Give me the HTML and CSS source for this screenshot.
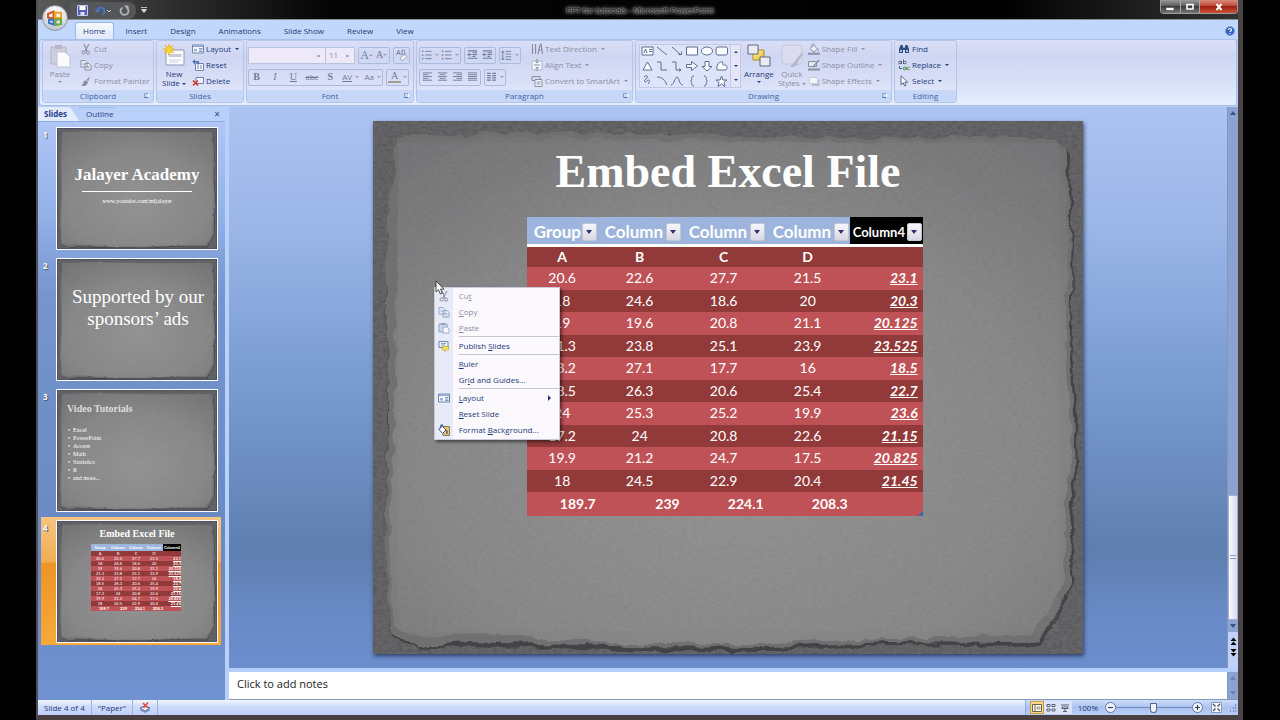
FILE: index.html
```
<!DOCTYPE html>
<html lang="en">
<head>
  <meta charset="UTF-8" />
  <title>PPT for tutorials - Microsoft PowerPoint</title>
  <meta name="viewport" content="width=device-width, initial-scale=1" />
  <link rel="stylesheet" href="styles.css">
</head>
<body>
  <!-- shared drawings -->
  <svg class="defs" width="0" height="0" aria-hidden="true">
    <defs>
      <radialGradient id="paper-fill" cx="50%" cy="62%" r="75%">
        <stop offset="0" stop-color="#919191" />
        <stop offset="0.6" stop-color="#858585" />
        <stop offset="1" stop-color="#717173" />
      </radialGradient>
      <linearGradient id="gold" x1="0" y1="0" x2="1" y2="1">
        <stop offset="0" stop-color="#fff3b0" />
        <stop offset="1" stop-color="#e8b820" />
      </linearGradient>
      <filter id="torn" x="-5%" y="-5%" width="110%" height="110%">
        <feTurbulence type="fractalNoise" baseFrequency="0.045" numOctaves="4" seed="7" result="n" />
        <feDisplacementMap in="SourceGraphic" in2="n" scale="10" xChannelSelector="R" yChannelSelector="G" />
      </filter>
      <filter id="grain" x="0" y="0" width="100%" height="100%">
        <feTurbulence type="fractalNoise" baseFrequency="0.2 0.35" numOctaves="4" seed="3" />
        <feColorMatrix values="1 0 0 0 0  1 0 0 0 0  1 0 0 0 0  0 0 0 0 1" />
      </filter>
    </defs>
    <symbol id="paper" viewBox="0 0 711 533" preserveAspectRatio="none">
      <rect width="711" height="533" fill="#535356" />
      <rect width="711" height="533" filter="url(#grain)" opacity="0.14" />
      <g transform="translate(-4 0)">
        <path filter="url(#torn)" fill="#434346" d="M28 18 L150 13 300 17 470 20 600 18 686 20 701 32 705 120 702 220 709 300 705 420 703 470 688 500 672 526 520 524 400 530 240 530 100 525 50 530 22 516 16 420 18 300 17 120Z" />
        <path filter="url(#torn)" fill="#707071" d="M28 16 L150 12 300 14 470 17 600 16 686 18 698 30 703 120 700 220 706 300 702 420 701 470 685 497 670 522 520 521 400 526 240 525 100 521 50 528 22 513 16 420 19 300 17 120Z" />
        <path filter="url(#torn)" fill="url(#paper-fill)" d="M31 19 L150 17 300 19 470 21 600 20 682 22 694 34 699 120 696 220 702 300 696 420 692 470 677 494 662 514 520 518 400 522 240 522 100 512 50 517 25 505 20 420 26 300 27 120Z" />
      </g>
      <rect x="26" y="22" width="660" height="488" filter="url(#grain)" opacity="0.05" />
    </symbol>
    <symbol id="i-cut" viewBox="0 0 12 12"><path d="M4 1 7 8M9 1 5 8" fill="none" stroke="currentColor" stroke-width="1.2" /><circle cx="3.6" cy="9.4" r="1.6" fill="none" stroke="currentColor" /><circle cx="8" cy="9.6" r="1.6" fill="none" stroke="currentColor" /></symbol>
    <symbol id="i-copy" viewBox="0 0 12 12"><path d="M1 1.500h4l2 2v4.500H1z M5 4.500h4l2 2v4.500H5z" fill="#eef2fc" stroke="currentColor" /><path d="M2.500 4h2M2.500 5.500h2M6.500 7.500h3M6.500 9h3" stroke="currentColor" stroke-width=".7" /></symbol>
    <symbol id="i-paste" viewBox="0 0 12 12"><path d="M1 2h8v8H1z" fill="#cfd6e6" stroke="currentColor" /><path d="M3 1h4v2H3z" fill="currentColor" /><path d="M5 5h4l2 2v4H5z" fill="#f5f7fd" stroke="currentColor" stroke-width=".8" /></symbol>
    <symbol id="i-brush" viewBox="0 0 12 12"><path d="M10 1 6.500 5l-3 1.500c0 2-1 3-2.500 4.500h4c2-1 2.500-2.500 3-4z" fill="currentColor" /><path d="M6.500 5 8 6.500" stroke="#fff" stroke-width=".8" /></symbol>
    <symbol id="i-layout" viewBox="0 0 12 12"><path d="M.5 2h11v8H.5z" fill="#f6f8ff" stroke="#6f84a8" /><path d="M1 2.500h10V4H1z" fill="#8ea6d0" /><path d="M2 6h3v2.500H2z" fill="#9fb3d8" /><path d="M7 5.500h3.500M7 7h3.500M7 8.500h3.500" stroke="#6b7ea6" stroke-width=".8" /></symbol>
    <symbol id="i-reset" viewBox="0 0 12 12"><path d="M3.500 4.500h8v7h-8z" fill="#f4f7ff" stroke="#6f84a8" /><path d="M5 7h2M8 7h2M5 9h2M8 9h2" stroke="#7587ab" /><path d="M5.500 5.500V3.500H3v1.800L.2 2.800 3 .3v1.600h4v3.600z" fill="#4c6fb5" /></symbol>
    <symbol id="i-delete" viewBox="0 0 12 12"><path d="M4 2.500h7.500v6H4z" fill="#eef3ff" stroke="#6f84a8" /><path d="m1 5.500 5 5M6 5.500l-5 5" stroke="#d5392b" stroke-width="1.700" /></symbol>
    <symbol id="i-publish" viewBox="0 0 12 12"><path d="M1 1.500h9v6H1z" fill="#eef2fb" stroke="#7186a8" /><path d="M3 3.500h5M3 5h4" stroke="#8ea0bf" /><path d="M4.500 6.500h6v3.500H8l-1 1.500L6.500 10h-2z" fill="#f7e45a" stroke="#ad9a28" stroke-width=".6" /></symbol>
    <symbol id="i-bucket" viewBox="0 0 12 12"><path d="M2 5.500 5.500 2l4 4L6 9z" fill="#eef1f8" stroke="currentColor" /><path d="M4 4.500V2c0-2 2.500-2 2.500 0" fill="none" stroke="currentColor" stroke-width=".8" /><path d="M9 5c2 1 2 2.500 1.500 4z" fill="currentColor" /><path d="M0 10.800h12" stroke="currentColor" stroke-width="2" /></symbol>
    <symbol id="i-format-bg" viewBox="0 0 12 12"><path d="M5 2.500h6.500v9H5z" fill="#efc55f" stroke="#7b7a78" /><path d="M.7 5 4 2l4 4-3.500 3.500z" fill="#fff" stroke="#4a5678" /><path d="M2.500 4.500V2c0-2 2.500-2 2.500 0M8 6c1.500.5 2 2 1 4z" fill="#5676bd" stroke="#4a5678" stroke-width=".7" /></symbol>
    <symbol id="i-list" viewBox="0 0 12 12"><path d="M4.500 2h7M4.500 6h7M4.500 10h7" stroke="currentColor" /><path d="M1 2h1.500M1 6h1.500M1 10h1.500" stroke="currentColor" stroke-width="1.600" /></symbol>
    <symbol id="i-indent" viewBox="0 0 12 12"><path d="M1 1.500h10M6 3.500h5M6 5.500h5M6 7.500h3M1 9.500h10" stroke="currentColor" stroke-width="1.200" /><path d="M5 5.500H1m2-2-2 2 2 2" fill="none" stroke="#56709f" /></symbol>
    <symbol id="i-spacing" viewBox="0 0 12 12"><path d="M5 2h6M5 5h6M5 8h6M5 11h6M2 1.500v10M.5 3.500 2 1.500l1.500 2M.5 9.500 2 11.500l1.500-2" fill="none" stroke="currentColor" /></symbol>
    <symbol id="i-left" viewBox="0 0 12 12"><path d="M1 1.500h10M1 3.500h6M1 5.500h10M1 7.500h6M1 9.500h10" stroke="currentColor" /></symbol>
    <symbol id="i-center" viewBox="0 0 12 12"><path d="M1 1.500h10M3 3.500h6M1 5.500h10M3 7.500h6M1 9.500h10" stroke="currentColor" /></symbol>
    <symbol id="i-right" viewBox="0 0 12 12"><path d="M1 1.500h10M5 3.500h6M1 5.500h10M5 7.500h6M1 9.500h10" stroke="currentColor" /></symbol>
    <symbol id="i-justify" viewBox="0 0 12 12"><path d="M1 1.500h10M1 3.500h10M1 5.500h10M1 7.500h10M1 9.500h10" stroke="currentColor" /></symbol>
    <symbol id="i-columns" viewBox="0 0 12 12"><path d="M1 2h4.300M6.700 2H11M1 4.500h4.300M6.700 4.500H11M1 7h4.300M6.700 7H11M1 9.500h4.300M6.700 9.500H11" stroke="currentColor" stroke-width="1.300" /></symbol>
    <symbol id="i-textdir" viewBox="0 0 12 12"><path d="M1.500 1v10M4.500 1v10M7 11l1.500-7L10 1l1.500 10M8 7h3" fill="none" stroke="currentColor" stroke-width="1.200" /></symbol>
    <symbol id="i-aligntext" viewBox="0 0 12 12"><path d="M1 2h10v9H1z" fill="#f2f4fb" stroke="#b2b8c8" /><path d="M6 0v4M6 8v4M3 6h6M4.500 2.500 6 4l1.500-1.500M4.500 9.500 6 8l1.500 1.500" fill="none" stroke="currentColor" /></symbol>
    <symbol id="i-smartart" viewBox="0 0 12 12"><path d="M1 1.500h8v4H1z" fill="#d5daea" stroke="currentColor" /><path d="M4 4.500h7v7H4z" fill="#f4f6fc" stroke="currentColor" /><path d="M5.500 7h4M5.500 9h4" stroke="currentColor" /></symbol>
    <symbol id="i-outline" viewBox="0 0 12 12"><path d="M.5 2.500h8v5h-8z" fill="#e6e9f4" stroke="currentColor" /><path d="M0 10.500h12" stroke="currentColor" stroke-width="2" /><path d="m11 1-6 7" stroke="currentColor" stroke-width="1.500" /></symbol>
    <symbol id="i-effects" viewBox="0 0 12 12"><path d="M3.500 5h8v6h-8z" fill="#b8bccb" /><path d="M1.500 2.500h8v6h-8z" fill="#f4f5fb" stroke="#c9cddc" /></symbol>
    <symbol id="i-find" viewBox="0 0 12 12"><path d="M1 10V6l1.500-4h2L5.500 5h1l1-3h2L11 6v4H7V7H5v3z" fill="#33507f" /><path d="M2 7h2v2H2zM8 7h2v2H8z" fill="#9fb8df" /></symbol>
    <symbol id="i-select" viewBox="0 0 12 12"><path d="M3 .8v9l2.200-2 1.400 3.200 1.500-.7L6.700 7.200h3z" fill="#fff" stroke="#4d5a78" stroke-width=".9" /></symbol>
  </svg>

  <div class="window">
    <header class="titlebar">
      <button class="office" aria-label="Office Button">
        <svg width="18" height="18" viewBox="0 0 18 18"><g fill="none" stroke-width="2"><path d="M2 5 7.500 2.500V9.500L2 8.500z" stroke="#dc5a22" /><path d="M9.500 3.500 15 4v5H9.500z" stroke="#e9a51e" /><path d="M3 10.500 7.500 11v4.500L3 14z" stroke="#3c74c4" /><path d="M9.500 10.500H15v4.500l-5.500 1z" stroke="#67a637" /></g></svg>
      </button>
      <div class="quick">
        <button aria-label="Save"><svg width="11" height="11" viewBox="0 0 11 11"><path d="M.5.5h10v10H.5z" fill="#5560b8" stroke="#c3c8ee" /><path d="M2.500 1h6v4h-6z" fill="#fff" /><path d="M3.500 7h4v3.500h-4z" fill="#dfe2f5" /></svg></button>
        <button aria-label="Undo"><svg width="17" height="11" viewBox="0 0 17 11"><path d="M2 6c1-5 8-4 7.500 1-.2 1-1 2-2 2.500" fill="none" stroke="#4a72b8" stroke-width="2" /><path d="M0 3.500 1 8l4.500-2z" fill="#4a72b8" /><path d="m12 5 2 2 2-2" fill="none" stroke="#ccc" /></svg></button>
        <button aria-label="Repeat"><svg width="11" height="11" viewBox="0 0 11 11"><path d="M7.500 2.500a4 4 0 1 1-4 0" fill="none" stroke="#b5b5b5" stroke-width="1.800" /><path d="M4.500.5h5v4z" fill="#b5b5b5" /></svg></button>
      </div>
      <button class="quick-more" aria-label="Customize Quick Access Toolbar"><svg width="6" height="6" viewBox="0 0 6 6"><path d="M0 .5h6M.5 2.500h5L3 5.500z" fill="#ddd" stroke="#ddd" stroke-width=".8" /></svg></button>
      <h1 class="caption"><span>PPT for tutorials</span> - <span>Microsoft PowerPoint</span></h1>
      <div class="sysbuttons">
        <button aria-label="Minimize"><svg width="10" height="8"><path d="M1 4.500h8v3H1z" fill="#fff" stroke="#444" stroke-width=".6" /></svg></button>
        <button aria-label="Restore"><svg width="10" height="8"><path d="M2 1.500h6v4.500H2z" fill="none" stroke="#fff" stroke-width="1.600" /></svg></button>
        <button class="close" aria-label="Close"><svg width="10" height="8"><path d="m2.500 1 5 6M7.500 1l-5 6" stroke="#fff" stroke-width="2" /></svg></button>
      </div>
    </header>

    <nav class="tabs">
      <button class="active">Home</button>
      <button>Insert</button>
      <button>Design</button>
      <button>Animations</button>
      <button>Slide Show</button>
      <button>Review</button>
      <button>View</button>
      <button class="help" aria-label="Help"><svg width="10" height="10"><circle cx="5" cy="5" r="4.500" fill="#2f5fc4" stroke="#8aa6dc" /><path d="M3.500 4c0-2 3-2 3 0 0 1-1.500 1-1.500 2M5 7v1" fill="none" stroke="#fff" stroke-width="1.200" /></svg></button>
    </nav>

    <div class="ribbon">
      <section class="group clipboard">
        <div class="body">
          <button class="big off"><svg width="22" height="24" viewBox="0 0 22 24"><path d="M2 3h15v17H2z" fill="#cdd0dc" stroke="#b3b6c4" /><path d="M6 1h7v4H6z" fill="#b5b8c6" /><path d="M8 8h8l5 5v10H8z" fill="#fafaff" stroke="#c0c3d0" /></svg><span>Paste</span><i class="chev"></i></button>
          <div class="stack">
            <button class="off"><svg class="ic"><use href="#i-cut" /></svg>Cut</button>
            <button class="off"><svg class="ic"><use href="#i-copy" /></svg>Copy</button>
            <button class="off"><svg class="ic"><use href="#i-brush" /></svg>Format Painter</button>
          </div>
        </div>
        <h2>Clipboard<i class="launch"></i></h2>
      </section>

      <section class="group slides">
        <div class="body">
          <button class="big"><svg width="24" height="24" viewBox="0 0 24 24"><path d="M4 6h18v15H4z" fill="#fbfbff" stroke="#8f9ab3" /><path d="M6.500 10h13v3h-13z" fill="#c6ccda" /><path d="M7 16h12M7 18h9" stroke="#cdd2df" /><path d="M7 0l1 3.500L11 1 9.500 4.500 13 5 9.500 6.500 12 9 8.300 8 7 11.500 5.700 8 2 9l2.500-2.500L1 5l3.500-.5L3 1l3 2.500z" fill="#f8d22e" stroke="#e2a81b" stroke-width=".5" /></svg><span>New<br>Slide <i class="chev"></i></span></button>
          <div class="stack">
            <button><svg class="ic"><use href="#i-layout" /></svg>Layout<i class="chev"></i></button>
            <button><svg class="ic"><use href="#i-reset" /></svg>Reset</button>
            <button><svg class="ic"><use href="#i-delete" /></svg>Delete</button>
          </div>
        </div>
        <h2>Slides</h2>
      </section>

      <section class="group font">
        <div class="body rows">
          <div class="row">
            <div class="combo">
              <select class="face" aria-label="Font"><option></option></select>
              <select class="size" aria-label="Font Size"><option>11</option></select>
            </div>
            <div class="set"><button class="serif grow" aria-label="Grow Font">A<i class="chev up"></i></button><button class="serif" aria-label="Shrink Font">A<i class="chev"></i></button></div>
            <div class="set"><button aria-label="Clear Formatting"><svg width="12" height="12" viewBox="0 0 12 12"><path d="m.5 6 2-5 2 5M1 4.500h3M6 1v4.500h2c1.500 0 1.500-2 0-2 1-.5 1-2.500-.5-2.500z" fill="none" stroke="#6e7896" stroke-width=".8" /><path d="M4 9 9 5l2 3-5 4z" fill="#f0f1f8" stroke="#a1a7bb" /></svg></button></div>
          </div>
          <div class="row">
            <div class="set wide">
              <button class="serif"><b>B</b></button><button class="serif"><em>I</em></button><button class="serif"><u>U</u></button><button><s>abc</s></button><button class="serif"><b>S</b></button><button><u>AV</u><i class="chev"></i></button><button>Aa<i class="chev"></i></button>
            </div>
            <div class="set"><button class="serif color">A</button><i class="chev"></i></div>
          </div>
        </div>
        <h2>Font<i class="launch"></i></h2>
      </section>

      <section class="group paragraph">
        <div class="body">
          <div class="rows">
            <div class="row">
              <div class="set"><button aria-label="Bullets"><svg class="ic"><use href="#i-list" /></svg><i class="chev"></i></button><button aria-label="Numbering"><svg class="ic"><use href="#i-list" /></svg><i class="chev"></i></button></div>
              <div class="set"><button aria-label="Decrease Indent"><svg class="ic"><use href="#i-indent" /></svg></button><button aria-label="Increase Indent"><svg class="ic"><use href="#i-indent" /></svg></button></div>
              <div class="set"><button aria-label="Line Spacing"><svg class="ic"><use href="#i-spacing" /></svg><i class="chev"></i></button></div>
            </div>
            <div class="row">
              <div class="set"><button aria-label="Align Left"><svg class="ic"><use href="#i-left" /></svg></button><button aria-label="Center"><svg class="ic"><use href="#i-center" /></svg></button><button aria-label="Align Right"><svg class="ic"><use href="#i-right" /></svg></button><button aria-label="Justify"><svg class="ic"><use href="#i-justify" /></svg></button></div>
              <div class="set"><button aria-label="Columns"><svg class="ic"><use href="#i-columns" /></svg><i class="chev"></i></button></div>
            </div>
          </div>
          <div class="stack">
            <button class="off"><svg class="ic"><use href="#i-textdir" /></svg>Text Direction<i class="chev"></i></button>
            <button class="off"><svg class="ic"><use href="#i-aligntext" /></svg>Align Text<i class="chev"></i></button>
            <button class="off"><svg class="ic"><use href="#i-smartart" /></svg>Convert to SmartArt<i class="chev"></i></button>
          </div>
        </div>
        <h2>Paragraph<i class="launch"></i></h2>
      </section>

      <section class="group drawing">
        <div class="body">
          <div class="gallery">
            <svg width="90" height="43" viewBox="0 0 90 43" fill="#fbfcff" stroke="#4d6187" stroke-width=".9">
              <path d="M2 2h11v8H2z" /><path d="m4 8 1.500-4L7 8M9 4.500h3M9 6.500h3" fill="none" />
              <path d="m17 2 10 8M32 2l9 8M38.500 9.500h3v-3" fill="none" />
              <path d="M46.500 2h11v8h-11z" /><ellipse cx="67" cy="6" rx="5.500" ry="4" /><rect x="76" y="2" width="11.500" height="8" rx="2" />
              <path d="M7.500 17 3 25h9z" /><path d="M17 17h4v8h6M32 17h4v8h5m-2-1.500 2 1.500-2 1.500" fill="none" />
              <path d="M46.500 19.500h5v-3l6 4.500-6 4.500v-3h-5zM65 16.500h4v5h3l-5 4.500-5-4.500h3zM83 17c-4-1-7 3-6 8h9c2-2 1-5-1-5-2 1-3-1-2-3z" />
              <path d="M4 32c3-3 5 0 2 2s-1 4 1 2 4 0 1 3M17 32c5 0 8 3 10 8M31 40c3 0 4-8 6-8s2 8 6 8M54 31c-3 0-2 3-2.500 4l-1 1 1 1c.5 1-.5 4 2.500 4M64 31c3 0 2 3 2.500 4l1 1-1 1c-.5 1 .5 4-2.500 4" fill="none" />
              <path d="m81.500 31 1.500 4h4l-3 2.500 1 4-3.500-2.500-3.500 2.500 1-4-3-2.500h4z" />
            </svg>
            <div class="spin"><i class="chev up"></i><i class="chev"></i><i class="chev"></i></div>
          </div>
          <button class="big arrange"><svg width="24" height="24" viewBox="0 0 24 24"><path d="M6 6h11v10H6z" fill="url(#gold)" stroke="#b08a24" /><path d="M1 1h10v9H1z" fill="#e9ecf5" stroke="#5e6779" /><path d="M13 13h10v9H13z" fill="#e9ecf5" stroke="#5e6779" /></svg><span>Arrange</span><i class="chev"></i></button>
          <button class="big off"><svg width="24" height="24" viewBox="0 0 24 24"><rect x="2" y="1" width="20" height="19" rx="3" fill="#dcdcef" stroke="#c4c8dd" /><path d="m22 8-7 9-5 6c5 0 8-1 8-5l5-8z" fill="#b5b9cc" /></svg><span>Quick<br>Styles <i class="chev"></i></span></button>
          <div class="stack">
            <button class="off"><svg class="ic"><use href="#i-bucket" /></svg>Shape Fill<i class="chev"></i></button>
            <button class="off"><svg class="ic"><use href="#i-outline" /></svg>Shape Outline<i class="chev"></i></button>
            <button class="off"><svg class="ic"><use href="#i-effects" /></svg>Shape Effects<i class="chev"></i></button>
          </div>
        </div>
        <h2>Drawing<i class="launch"></i></h2>
      </section>

      <section class="group editing">
        <div class="body">
          <div class="stack">
            <button><svg class="ic"><use href="#i-find" /></svg>Find</button>
            <button><svg class="ic" viewBox="0 0 12 12"><circle cx="2" cy="3.500" r="1.300" fill="none" stroke="#56627f" /><path d="M3.500 2v3M5.500 .5V5" stroke="#56627f" /><circle cx="6.800" cy="3.500" r="1.300" fill="none" stroke="#56627f" /><path d="M1.500 7v2.500h2.500" fill="none" stroke="#4363a0" /><circle cx="6.500" cy="9.500" r="1.300" fill="none" stroke="#3f8f45" /><path d="M8.200 8v3M11.500 8.500c-3-1.500-3 3.500 0 2" fill="none" stroke="#3f8f45" /></svg>Replace<i class="chev"></i></button>
            <button><svg class="ic"><use href="#i-select" /></svg>Select<i class="chev"></i></button>
          </div>
        </div>
        <h2>Editing</h2>
      </section>
    </div>

    <main class="main">
      <aside class="panel">
        <div class="panel-tabs">
          <button class="active">Slides</button>
          <button>Outline</button>
          <button class="x" aria-label="Close pane">×</button>
        </div>
        <ol class="thumbs">
          <li><span class="num">1</span>
            <div class="thumb"><svg class="paper"><use href="#paper" /></svg>
              <div class="t-title"><h3>Jalayer Academy</h3><hr><p>www.youtube.com/mljalayer</p></div>
            </div>
          </li>
          <li><span class="num">2</span>
            <div class="thumb"><svg class="paper"><use href="#paper" /></svg>
              <div class="t-section"><h3>Supported by our sponsors’ ads</h3></div>
            </div>
          </li>
          <li><span class="num">3</span>
            <div class="thumb"><svg class="paper"><use href="#paper" /></svg>
              <div class="t-list"><h3>Video Tutorials</h3>
                <ul><li>Excel</li><li>PowerPoint</li><li>Access</li><li>Math</li><li>Statistics</li><li>R</li><li>and more...</li></ul>
              </div>
            </div>
          </li>
          <li class="current"><span class="num">4</span>
            <div class="thumb"><svg class="paper"><use href="#paper" /></svg>
              <div class="t-table"><h3>Embed Excel File</h3><table class="sheet mini"></table></div>
            </div>
          </li>
        </ol>
      </aside>

      <div class="editor">
        <div class="workspace">
          <div class="canvas">
            <div class="slide">
              <svg class="paper"><use href="#paper" /></svg>
              <div class="slide-content">
                <h2>Embed Excel File</h2>
                <table class="sheet full"></table>
              </div>
              <div class="menu" role="menu">
                <button class="off"><svg class="ic"><use href="#i-cut" /></svg><span>Cu<u>t</u></span></button>
                <button class="off"><svg class="ic blue"><use href="#i-copy" /></svg><span><u>C</u>opy</span></button>
                <button class="off"><svg class="ic blue"><use href="#i-paste" /></svg><span><u>P</u>aste</span></button>
                <hr>
                <button><svg class="ic"><use href="#i-publish" /></svg><span>Publish <u>S</u>lides</span></button>
                <hr>
                <button><i class="ic"></i><span><u>R</u>uler</span></button>
                <button><i class="ic"></i><span>Gr<u>i</u>d and Guides...</span></button>
                <hr>
                <button><svg class="ic"><use href="#i-layout" /></svg><span><u>L</u>ayout</span><i class="sub"></i></button>
                <button><i class="ic"></i><span><u>R</u>eset Slide</span></button>
                <button><svg class="ic"><use href="#i-format-bg" /></svg><span>Format <u>B</u>ackground...</span></button>
              </div>
              <svg class="cursor" width="10" height="15" viewBox="0 0 10 15"><path d="M1 1v11l2.500-2.300L5.300 14l2-.9-1.800-4H9z" fill="#fff" stroke="#222" stroke-width=".8" /></svg>
            </div>
          </div>
          <div class="scroll">
            <i class="arr up"></i><div class="track"><div class="grip"></div></div><i class="arr"></i>
            <div class="jump"><svg width="7" height="20" viewBox="0 0 7 20"><path d="M.5 4 3.500.5l3 3.500zM.5 8l3-3.500 3 3.500zM.5 12l3 3.500 3-3.500zM.5 16l3 3.500 3-3.500z" fill="#000" /></svg></div>
          </div>
        </div>
        <div class="notes">
          <textarea aria-label="Notes" placeholder="Click to add notes"></textarea>
          <div class="scroll dim"><i class="arr up"></i><div class="track"></div><i class="arr"></i></div>
        </div>
      </div>
    </main>

    <footer class="status">
      <div class="info">
        <span>Slide 4 of 4</span>
        <span>"Paper"</span>
        <span><svg width="12" height="11" viewBox="0 0 12 11"><path d="M1 6 6 4l5 2-5 3z" fill="#f4f6ff" stroke="#59699c" /><path d="M1 7v1.500L6 11l5-2.500V7L6 9z" fill="#7d91c8" /><path d="m4 1 5 5M9 .5 4.500 6" stroke="#dc4a38" stroke-width="1.500" /></svg></span>
      </div>
      <div class="views">
        <button class="active" aria-label="Normal"><svg width="10" height="8"><path d="M.5.5h9v7h-9zM3 1v6" fill="#fff" stroke="#6b6242" /><path d="M5 3h3v2H5z" fill="none" stroke="#6b6242" stroke-width=".7" /></svg></button>
        <button aria-label="Slide Sorter"><svg width="10" height="8"><path d="M1 .5h3v2H1zM6 .5h3v2H6zM1 5h3v2H1zM6 5h3v2H6z" fill="#fff" stroke="#555e77" /></svg></button>
        <button aria-label="Slide Show"><svg width="10" height="8"><path d="M1 1h8M2 3h6v1.500H2zM5 5v2M3 7.500h4" fill="#fff" stroke="#555e77" /></svg></button>
      </div>
      <label for="zoom">100%</label>
      <button class="round" aria-label="Zoom Out"><svg width="7" height="7"><path d="M1 3.500h5" stroke="#333c55" stroke-width="1.200" /></svg></button>
      <input id="zoom" type="range" min="0" max="100" value="49">
      <button class="round" aria-label="Zoom In"><svg width="7" height="7"><path d="M1 3.500h5M3.500 1v5" stroke="#333c55" stroke-width="1.200" /></svg></button>
      <button class="fit" aria-label="Fit slide to window"><svg width="11" height="11"><path d="M.5.500h10v10H.5z" fill="#f7f8fd" stroke="#8d97b4" /><path d="m2 2 2.500 2.500M9 2 6.500 4.500M2 9l2.500-2.500M9 9 6.500 6.500" stroke="#3d4863" stroke-width="1.200" /></svg></button>
      <svg class="resize" width="8" height="8"><path d="M6 1h1M4 4h1M6 4h1M1 7h1M4 7h1M6 7h1" stroke="#6479ad" stroke-width="1.500" /></svg>
    </footer>
  </div>
  <script src="script.js"></script>
</body>
</html>
```
FILE: styles.css
```
* {
  box-sizing: border-box;
}
body {
  margin: 0;
  background: #000;
  font-family: "Open Sans", "Noto Sans", sans-serif;
  font-size: 8px;
  line-height: 10px;
  color: #1e3a78;
}
h1, h2, h3, p, ol, ul {
  margin: 0;
  padding: 0;
  font-size: 8px;
  font-weight: normal;
}
button {
  display: flex;
  align-items: center;
  border: 0;
  padding: 0;
  background: none;
  font: inherit;
  color: inherit;
}
svg {
  flex: none;
}
.defs {
  position: absolute;
}
.ic {
  flex: none;
  width: 12px;
  height: 12px;
}
.off {
  color: #8b8fa3;
}

.window {
  display: flex;
  flex-direction: column;
  height: 100vh;
  min-height: 600px;
  margin: 0 37px 0 36px;
  border-left: 2px solid #4d5058;
  border-right: 5px solid #4a4447;
  border-bottom: 5px solid #4a3f41;
  background: #b9cdf3;
}

/* title bar */
.titlebar {
  position: relative;
  display: grid;
  grid-template-columns: 32px 66px 16px 1fr 78px;
  align-items: start;
  height: 20px;
  background: linear-gradient(90deg, #5a5a5a, #2b2b2b 12%, #050505 24%, #000 80%, #333);
  border-bottom: 1px solid #8b8f96;
}
.office {
  position: relative;
  z-index: 2;
  justify-content: center;
  width: 26px;
  height: 26px;
  margin: 5px 0 0 4px;
  border-radius: 50%;
  border: 1px solid #8f949f;
  background: radial-gradient(circle at 50% 25%, #fff, #dcdfe8 55%, #a9afbd);
}
.quick {
  display: flex;
  gap: 7px;
  align-items: center;
  height: 17px;
  margin-top: 2px;
  padding-left: 7px;
  border-radius: 0 8px 8px 0;
  background: #55565a;
}
.quick-more {
  height: 20px;
  padding-left: 5px;
}
.caption {
  padding: 5px 32px 0 0;
  text-align: center;
  color: #111;
  text-shadow: 0 0 2px #ccc, 0 0 3px #bbb, 0 0 5px #aaa, 0 0 6px #999;
}
.sysbuttons {
  display: flex;
  height: 14px;
  border: 1px solid #9c9c9c;
  border-top: 0;
  border-radius: 0 0 4px 4px;
  overflow: hidden;
}
.sysbuttons button {
  flex: 1;
  justify-content: center;
  background: linear-gradient(#9a9a9a, #555 50%, #3b3b3b 50%, #777);
  border-right: 1px solid #aaa;
}
.sysbuttons .close {
  flex: 2;
  border-right: 0;
  background: linear-gradient(#d98a7d, #bb4332 50%, #9c1f10 50%, #cc5038);
}

/* ribbon */
.tabs {
  display: flex;
  gap: 1px;
  align-items: flex-end;
  height: 19px;
  padding: 0 3px 0 37px;
  background: #c1d8fc;
}
.tabs button {
  height: 17px;
  padding: 0 11px;
}
.tabs .active {
  border: 1px solid #9cb8e6;
  border-bottom: 0;
  border-radius: 3px 3px 0 0;
  background: linear-gradient(#f6f9ff, #dfe7fb);
  padding: 0 7px;
}
.tabs .help {
  margin-left: auto;
  padding: 0;
}
.ribbon {
  display: flex;
  gap: 2px;
  height: 67px;
  padding: 0 2px 2px;
  border: 1px solid #a5c0ea;
  border-radius: 3px;
  margin: 0 1px 0;
  background: linear-gradient(#dcdff8, #cfd6f2 25%, #d8def6 60%, #e6edfe);
}
.group {
  display: flex;
  flex-direction: column;
  flex: none;
  border: 1px solid #b3c6ea;
  border-radius: 3px;
  overflow: hidden;
}
.clipboard { width: 112px; }
.slides { width: 88px; }
.font { width: 168px; }
.paragraph { width: 217px; }
.drawing { width: 257px; }
.editing { width: 63px; }
.group .body {
  display: flex;
  flex: 1;
  min-height: 0;
  padding: 0 2px 0 3px;
}
.group h2 {
  position: relative;
  flex: none;
  height: 12px;
  line-height: 11px;
  text-align: center;
  color: #4463a6;
  background: #c6d7f7;
}
.launch {
  position: absolute;
  right: 4px;
  top: 3px;
  width: 5px;
  height: 5px;
  border: 1px solid #8ba0cb;
  border-right-color: #fff;
  border-bottom-color: #5874b0;
}
.stack button {
  height: 16px;
  gap: 2px;
  white-space: nowrap;
}
.stack .chev {
  margin-left: 2px;
}
.clipboard .stack {
  margin-left: 6px;
}
.slides .stack {
  margin-left: 4px;
}
.big {
  flex-direction: column;
  min-width: 28px;
  padding-top: 3px;
  text-align: center;
}
.big span {
  line-height: 9px;
  padding-top: 1px;
}
.big > .chev {
  margin-top: 3px;
}
.chev {
  display: inline-block;
  flex: none;
  width: 0;
  height: 0;
  border: 2px solid transparent;
  border-top-color: currentColor;
  border-bottom: 0;
  vertical-align: middle;
}
.chev.up {
  transform: rotate(180deg);
}
.rows {
  flex-direction: column;
}
.row {
  display: flex;
  gap: 3px;
  height: 22px;
  align-items: center;
}
.group .rows {
  padding-top: 3px;
}
.font .body {
  padding-left: 1px;
}
.paragraph .body {
  padding-left: 2px;
}
.paragraph .rows {
  width: 112px;
}
.combo {
  display: flex;
}
.combo select {
  appearance: none;
  height: 17px;
  border: 1px solid #b9c4de;
  padding: 0 3px;
  color: #8f93a8;
  font: inherit;
  background: linear-gradient(#a9adbd, #a9adbd) calc(100% - 5px) 7px / 3px 2px no-repeat, #eee9f8;
}
.combo .face {
  width: 78px;
}
.combo .size {
  width: 29px;
  border-left: 0;
}
.set {
  display: flex;
  align-items: center;
  height: 17px;
  padding: 0 1px;
  gap: 2px;
  border: 1px solid #a9bbe0;
  border-radius: 2px;
  color: #717c9a;
}
.set button {
  min-width: 13px;
  justify-content: center;
  gap: 3px;
}
.set .serif {
  gap: 0;
}
.set .ic {
  width: 11px;
}
.set .chev {
  color: #9aa3bd;
}
.set.wide {
  width: 135px;
  justify-content: space-between;
}
.serif {
  font-family: "Liberation Serif", serif;
  font-size: 10px;
}
.serif.grow {
  font-size: 12px;
}
.color {
  height: 12px;
  border-bottom: 2px solid #a59c90;
}
.gallery {
  display: flex;
  width: 102px;
  height: 44px;
  margin-top: 3px;
  border: 1px solid #c0cbe7;
  background: #dde3f8;
}
.spin {
  display: flex;
  flex-direction: column;
  justify-content: space-around;
  align-items: center;
  flex: 1;
  border-left: 1px solid #c0cbe7;
  background: #e6e5f8;
}
.arrange {
  margin: 0 4px 0 3px;
}
.drawing .stack {
  margin-left: 2px;
}

/* slide panel */
.main {
  display: flex;
  flex: 1;
  min-height: 0;
  margin-top: 1px;
}
.panel {
  flex: none;
  width: 191px;
  border-right: 4px solid #b8d1fa;
  background: linear-gradient(#b4c9f8, #94b1e8 18%, #7595cc 32%, #6889c2 75%, #7092d0);
}
.panel-tabs {
  display: flex;
  height: 15px;
  border-bottom: 1px solid #8dabe0;
  background: #b9d0fa;
}
.panel-tabs button {
  padding: 0 12px 0 7px;
  color: #24408e;
}
.panel-tabs button:nth-child(2) {
  background: linear-gradient(#9db9ec, #bcd0f8 2px);
  clip-path: polygon(0 0, 76% 0, 100% 100%, 0 100%);
}
.panel-tabs .active {
  font-weight: bold;
  padding-left: 6px;
  background: #e3ecff;
  clip-path: polygon(0 0, 78% 0, 100% 100%, 0 100%);
}
.panel-tabs .x {
  margin-left: auto;
  padding: 0 5px;
  font-size: 10px;
}
.thumbs {
  display: flex;
  flex-direction: column;
  gap: 3px;
  padding: 2px 4px 0 3px;
  list-style: none;
}
.thumbs > li {
  display: flex;
  height: 128px;
  padding: 3px 3px 2px 2px;
}
.thumbs > .current {
  background: linear-gradient(#f6c480, #f0ad54 35%, #ee9427 36%, #f7a93a);
}
.num {
  width: 13px;
  padding-top: 3px;
  font-weight: bold;
  color: #fff;
  text-shadow: 1px 1px 1px #456;
}
.thumb {
  display: grid;
  flex: 1;
  height: 123px;
  border: 1px solid #fff;
  outline: 1px solid #4b5266;
  outline-offset: -2px;
  color: #fff;
  font-family: "Liberation Serif", serif;
  overflow: hidden;
}
.thumb > *, .slide > .paper, .slide-content {
  grid-area: 1 / 1;
  min-width: 0;
}
.paper {
  width: 100%;
  height: 100%;
}
.thumb h3 {
  font-size: 17px;
  line-height: 22px;
}
.t-title, .t-section {
  text-align: center;
}
.t-title {
  padding-top: 36px;
}
.t-title h3, .t-list h3, .t-table h3 {
  font-weight: bold;
}
.t-title hr {
  width: 110px;
  margin: 5px auto 4px;
  border: 0;
  border-top: 1px solid #fff;
}
.t-title p {
  font-size: 6px;
}
.t-section {
  padding: 27px 8px 0 10px;
}
.thumb .t-section h3 {
  font-size: 19px;
}
.t-list {
  padding: 8px 10px;
}
.thumb .t-list h3 {
  font-size: 10px;
  color: #ddd;
}
.t-list ul {
  padding: 6px 0 0 5px;
  list-style: none;
}
.t-list li {
  height: 8px;
  font-size: 6px;
  line-height: 8px;
}
.t-list li::before {
  content: "•";
  margin: 0 3px 0 -4px;
}
.t-table {
  padding-top: 3px;
}
.thumb .t-table h3 {
  font-size: 10px;
  line-height: 20px;
  text-align: center;
}

/* editor */
.editor {
  display: flex;
  flex-direction: column;
  flex: 1;
  min-width: 0;
}
.workspace {
  display: flex;
  flex: 1;
  min-height: 0;
  border-bottom: 4px solid #b4d0fa;
}
.canvas {
  flex: 1;
  display: flex;
  justify-content: center;
  padding: 14px 0;
  min-width: 0;
  background: linear-gradient(#adc3f2, #9ab5e6 22%, #7e9fd4 45%, #5f7fb0 79%, #6a8bc8 92%, #6c8ecc);
}
.slide {
  position: relative;
  display: grid;
  height: 100%;
  aspect-ratio: 4 / 3;
  box-shadow: 1px 2px 4px rgba(20, 30, 60, 0.7);
}
.slide-content {
  padding: 23px 0 0;
  color: #fff;
}
.slide-content h2 {
  font: bold 46px/56px "Liberation Serif", serif;
  text-align: center;
}
.sheet {
  border-collapse: collapse;
  table-layout: fixed;
  font-family: Lato, sans-serif;
  color: #fff;
}
.sheet th, .sheet td {
  padding: 0;
  white-space: nowrap;
  text-align: center;
}
.sheet thead th {
  background: #9db5dc;
}
.sheet thead th:last-child {
  background: #000;
}
.sheet tbody tr {
  background: #bf5256;
}
.sheet tbody tr:nth-child(odd) {
  background: #923a3a;
}
.sheet tfoot tr {
  background: #bf5256;
}
.sheet tfoot td {
  text-align: right;
  font-weight: bold;
}
.sheet tbody td:last-child {
  text-align: right;
  font-weight: bold;
  font-style: italic;
  text-decoration: underline;
}
.full {
  width: 396px;
  margin: 17px 0 0 154px;
  font-size: 14px;
  line-height: 20px;
}
.full col:first-child { width: 71px; }
.full col:last-child { width: 73px; }
.full thead th {
  height: 28px;
  border-bottom: 3px solid #fff;
  font-size: 17px;
}
.full .head {
  display: flex;
  align-items: center;
  justify-content: flex-end;
  height: 25px;
  padding: 4px 1px 0 0;
}
.full .head span {
  flex: 1;
  padding-left: 7px;
  text-align: left;
}
.full th:last-child .head span {
  font-size: 13px;
  padding-left: 3px;
}
.full .head button {
  flex: none;
  justify-content: center;
  width: 15px;
  height: 18px;
  border: 1px solid #c5c5d2;
  border-radius: 2px;
  background: linear-gradient(#f6f6fb, #d8d8e4);
  color: #303070;
}
.full .head .chev {
  border-width: 4px 3px 0;
}
.full tbody tr { height: 23px; }
.full tbody tr:nth-child(odd) { height: 22px; }
.full tbody tr:first-child { height: 21px; font-weight: bold; }
.full tfoot tr { height: 24px; }
.full tbody td:last-child { padding-right: 5px; }
.full tfoot td { padding-right: 2px; }
.full tfoot td:last-child {
  background: linear-gradient(315deg, #4a62a8 4px, transparent 4px);
}
.mini {
  width: 90px;
  margin: 0 0 0 34px;
  font-size: 4px;
  line-height: 5px;
}
.mini .head {
  height: 7px;
  line-height: 7px;
}
.mini button {
  display: none;
}
.mini tr {
  height: 5px;
}

/* context menu */
.menu {
  position: absolute;
  left: 61px;
  top: 166px;
  width: 126px;
  padding: 0 0 1px;
  border: 1px solid #c9c9da;
  background: linear-gradient(90deg, #e7ebf8 18px, #fbf8fe 18px);
  box-shadow: 2px 2px 3px rgba(0, 0, 0, 0.5);
}
.menu button {
  width: 100%;
  height: 16px;
  padding-left: 3px;
  gap: 9px;
  white-space: nowrap;
}
.menu hr {
  height: 2px;
  margin: 0 0 0 24px;
  border: 0;
  border-top: 1px solid #c5c5d5;
}
.menu .blue {
  color: #8fa3c8;
}
.sub {
  margin: 0 8px 0 auto;
  border: 3px solid transparent;
  border-left-color: #24386e;
  border-right: 0;
}
.cursor {
  position: absolute;
  left: 62px;
  top: 159px;
}

/* scroll bars */
.scroll {
  display: flex;
  flex-direction: column;
  align-items: center;
  flex: none;
  width: 11px;
  background: #8ba3d0;
  border-left: 1px solid #7f97c4;
}
.arr {
  margin: 4px 0;
  border: 3px solid transparent;
  border-top: 4px solid #3b5488;
  border-bottom: 0;
}
.arr.up {
  transform: rotate(180deg);
}
.track {
  display: flex;
  flex-direction: column;
  justify-content: flex-end;
  flex: 1;
  width: 100%;
}
.grip {
  height: 25%;
  border: 1px solid #a5b0cf;
  border-radius: 1px;
  background: linear-gradient(#8f9abb 1px, transparent 1px 3px, #8f9abb 3px) center / 6px 4px no-repeat, linear-gradient(90deg, #fafaff, #d7daf0);
}
.jump {
  width: 100%;
  height: 36px;
  padding: 5px 0 0 2px;
  background: #c0d2f8;
}
.notes {
  display: flex;
  height: 28px;
  border-bottom: 1px solid #8398bd;
}
.notes textarea {
  flex: 1;
  resize: none;
  border: 0;
  padding: 5px 8px;
  background: #fff;
  font: 11px/14px "Open Sans", sans-serif;
}
.notes textarea::placeholder {
  color: #222;
}
.dim .arr {
  opacity: 0.4;
}

/* status bar */
.status {
  display: flex;
  align-items: center;
  height: 15px;
  padding-right: 1px;
  background: linear-gradient(#cfdffc, #a9c2f0 50%, #b9cff8);
}
.info {
  display: flex;
  flex: 1;
  height: 15px;
  background: linear-gradient(#f3f6ff, #cddafb 45%, #c2d2fa);
  border-right: 1px solid #93aada;
}
.info span {
  display: flex;
  align-items: center;
  padding: 0 6px;
  border-right: 1px solid #9db2de;
}
.views {
  display: flex;
  margin: 0 6px 0 4px;
}
.views button {
  width: 14px;
  height: 13px;
  justify-content: center;
  background: #dbe4fa;
}
.views .active {
  border: 1px solid #c99b3e;
  background: #fbd98a;
}
.round {
  justify-content: center;
  width: 11px;
  height: 11px;
  margin-left: 7px;
  border: 1px solid #64749c;
  border-radius: 50%;
  background: #f2f5fd;
}
.round ~ .round {
  margin-left: 0;
}
#zoom {
  appearance: none;
  width: 76px;
  height: 11px;
  margin: 0;
  background: linear-gradient(#7288bb, #7288bb) center / 100% 1px no-repeat;
}
#zoom::-webkit-slider-thumb {
  appearance: none;
  width: 7px;
  height: 10px;
  border: 1px solid #55658f;
  border-radius: 1px 1px 4px 4px;
  background: #eef2fd;
}
.fit {
  margin: 0 7px 0 8px;
}
```
FILE: script.js
```
const headers = ['Group', 'Column', 'Column', 'Column', 'Column4'];
const rows = [
  ['A', 'B', 'C', 'D', ''],
  ['20.6', '22.6', '27.7', '21.5', '23.1'],
  ['18', '24.6', '18.6', '20', '20.3'],
  ['19', '19.6', '20.8', '21.1', '20.125'],
  ['21.3', '23.8', '25.1', '23.9', '23.525'],
  ['23.2', '27.1', '17.7', '16', '18.5'],
  ['18.5', '26.3', '20.6', '25.4', '22.7'],
  ['24', '25.3', '25.2', '19.9', '23.6'],
  ['17.2', '24', '20.8', '22.6', '21.15'],
  ['19.9', '21.2', '24.7', '17.5', '20.825'],
  ['18', '24.5', '22.9', '20.4', '21.45']
];
const totals = ['189.7', '239', '224.1', '208.3', ''];

const cells = (list) => list.map((v) => `<td>${v}</td>`).join('');

document.querySelectorAll('.sheet').forEach((table) => {
  table.innerHTML = `
    <colgroup>${'<col>'.repeat(5)}</colgroup>
    <thead><tr>${headers.map((h) => `
      <th><div class="head"><span>${h}</span><button aria-label="Filter"><i class="chev"></i></button></div></th>`).join('')}
    </tr></thead>
    <tbody>${rows.map((r) => `<tr>${cells(r)}</tr>`).join('')}</tbody>
    <tfoot><tr>${cells(totals)}</tr></tfoot>
  `;
});
```
